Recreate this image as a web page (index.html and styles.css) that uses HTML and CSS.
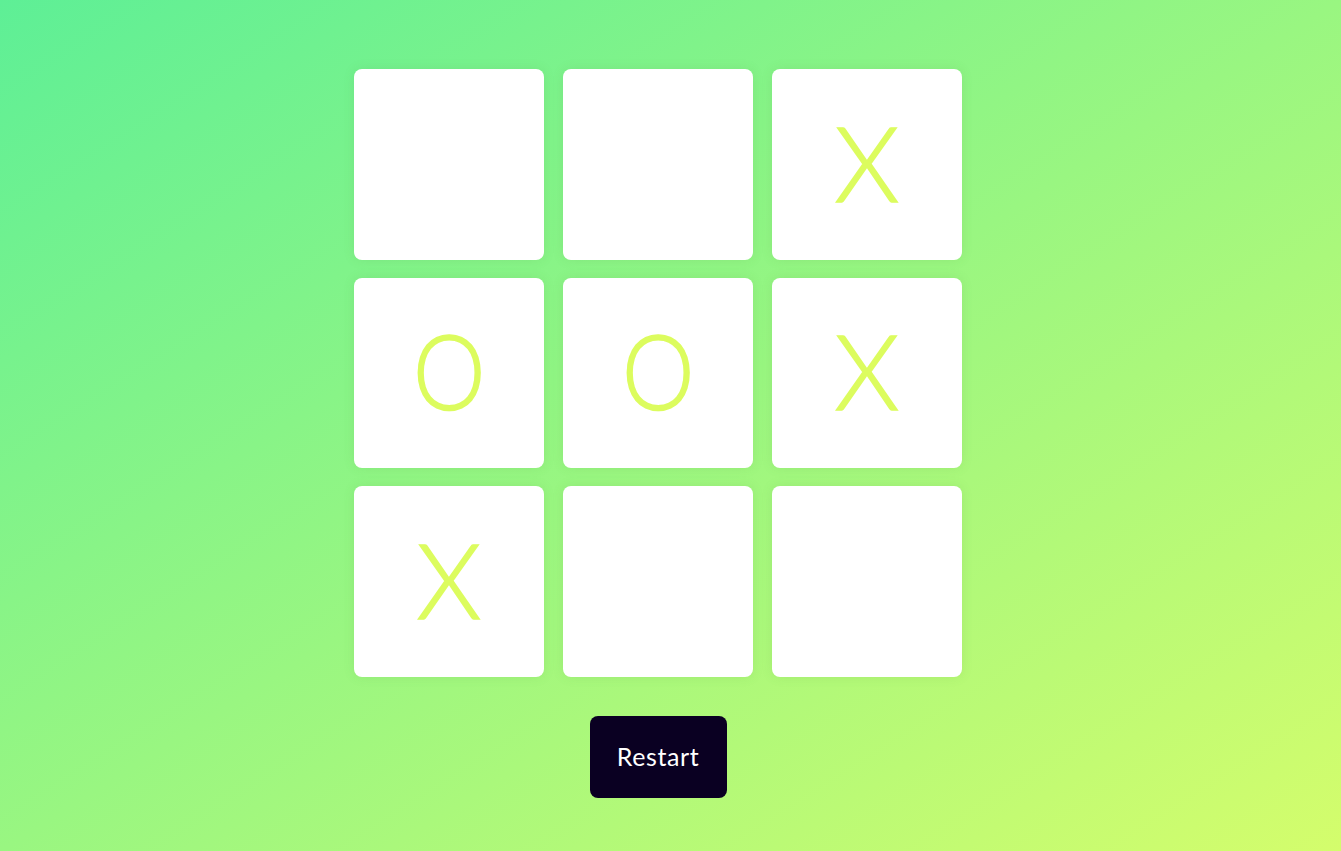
FILE: index.html
```html
<!DOCTYPE html>
<html lang="en">
<head>
<meta charset="utf-8">
<title>Tic Tac Toe</title>
<link rel="stylesheet" href="styles.css">
</head>
<body>
<main class="game">
  <div class="board">
    <div class="cell"></div>
    <div class="cell"></div>
    <div class="cell"><span class="mark">X</span></div>
    <div class="cell"><span class="mark o">O</span></div>
    <div class="cell"><span class="mark o">O</span></div>
    <div class="cell"><span class="mark">X</span></div>
    <div class="cell"><span class="mark">X</span></div>
    <div class="cell"></div>
    <div class="cell"></div>
  </div>
  <button class="restart">Restart</button>
</main>
</body>
</html>
```
FILE: styles.css
```css
html, body {
  margin: 0;
  height: 100%;
}
body {
  background: linear-gradient(to bottom right, #5eef96, #d4fd6c);
  font-family: Lato, "Open Sans", sans-serif;
  box-sizing: border-box;
  padding-right: 25px;
}
.game {
  display: flex;
  flex-direction: column;
  align-items: center;
  padding-top: 69px;
  gap: 39px;
}
.board {
  display: grid;
  grid-template-columns: repeat(3, 190.5px);
  grid-auto-rows: 190.5px;
  gap: 18px 18.5px;
}
.cell {
  background: #ffffff;
  border-radius: 8px;
  box-shadow: 0 0 12px rgba(80, 140, 60, 0.12);
  display: flex;
  align-items: center;
  justify-content: center;
  color: #dcfc5e;
  font-size: 104px;
  font-weight: 300;
  line-height: 1;
  padding-bottom: 5px;
  box-sizing: border-box;
}
.mark {
  display: inline-block;
  -webkit-text-stroke: 1.6px #dcfc5e;
}
.mark.o {
  transform: scaleX(0.88);
}
.restart {
  width: 137px;
  height: 82px;
  border: none;
  border-radius: 8px;
  background: #0a0022;
  color: #ffffff;
  font-family: Lato, "Open Sans", sans-serif;
  font-size: 25px;
  letter-spacing: 0.6px;
  padding-bottom: 2px;
  cursor: pointer;
}
```
